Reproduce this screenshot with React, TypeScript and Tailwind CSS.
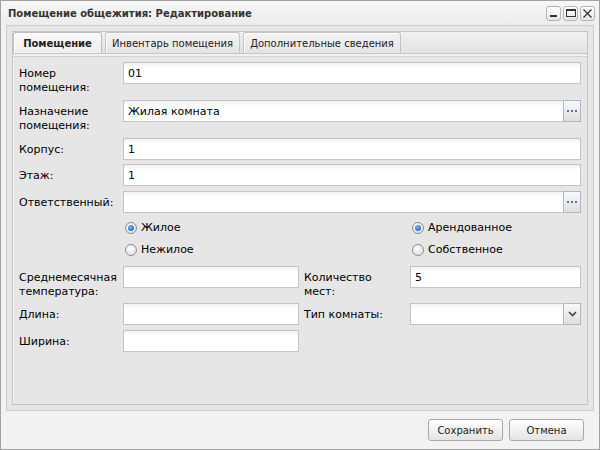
import type { ReactNode } from "react";

const font = "font-['DejaVu_Sans',sans-serif]";

function Label({ children, w = "w-[104px]" }: { children: ReactNode; w?: string }) {
  return <div className={`${w} shrink-0 pt-[5px] text-[11px] leading-[14px] text-[#000]`}>{children}</div>;
}

function Field({ value = "", className = "" }: { value?: string; className?: string }) {
  return (
    <div
      className={`h-[22px] border border-[#c4c4c4] bg-[linear-gradient(#f1f1f1,#ffffff_5px)] px-[4px] pt-[1px] text-[11px] leading-[20px] text-black ${className}`}
    >
      {value}
    </div>
  );
}

function TriggerField({ value = "", kind }: { value?: string; kind: "dots" | "arrow" }) {
  return (
    <div className="flex h-[22px] flex-1">
      <div className="flex-1 border border-r-0 border-[#c4c4c4] bg-[linear-gradient(#f1f1f1,#ffffff_5px)] px-[4px] pt-[1px] text-[11px] leading-[20px] text-black">
        {value}
      </div>
      <div className="flex w-[18px] items-center justify-center border border-[#b3b6c6] bg-[linear-gradient(#fafafa,#dedede)]">
        {kind === "dots" ? (
          <div className="flex gap-[2px]">
            <span className="h-[2px] w-[2px] bg-[#3b7bc8]" />
            <span className="h-[2px] w-[2px] bg-[#3b7bc8]" />
            <span className="h-[2px] w-[2px] bg-[#3b7bc8]" />
          </div>
        ) : (
          <svg width="9" height="6" viewBox="0 0 9 6">
            <path d="M1 1 L4.5 4.5 L8 1" stroke="#444" strokeWidth="1.6" fill="none" />
          </svg>
        )}
      </div>
    </div>
  );
}

function Radio({ checked, label }: { checked?: boolean; label: string }) {
  return (
    <div className="flex h-[22px] items-center gap-[4px]">
      <span className="flex h-[12px] w-[12px] items-center justify-center rounded-full border border-[#8e8f8f] bg-[radial-gradient(circle_at_40%_35%,#ffffff,#d8d8d8)]">
        {checked && <span className="h-[6px] w-[6px] rounded-full bg-[radial-gradient(circle_at_40%_35%,#6fb6ff,#0a58b0)]" />}
      </span>
      <span className="text-[11px] text-black">{label}</span>
    </div>
  );
}

function ToolButton({ children }: { children: ReactNode }) {
  return (
    <div className="flex h-[15px] w-[15px] items-center justify-center rounded-[3px] border border-[#b4b4b4] bg-[linear-gradient(#ffffff,#e6e6e6)]">
      {children}
    </div>
  );
}

function Button({ children }: { children: ReactNode }) {
  return (
    <button className="h-[22px] w-[75px] rounded-[3px] border border-[#a9a9a9] bg-[linear-gradient(#ffffff,#e4e4e4)] text-[10px] text-[#222]">
      {children}
    </button>
  );
}

function Tab({ children, active, w }: { children: ReactNode; active?: boolean; w: string }) {
  return (
    <div
      className={`flex h-[21px] ${w} items-center justify-center whitespace-nowrap rounded-t-[3px] border border-b-0 text-[10px] text-[#222] shadow-[inset_1px_1px_0_#ffffff] ${
        active
          ? "border-[#bdbdbd] bg-[linear-gradient(#fafafa,#eeeeee)] font-bold"
          : "border-[#c4c4c4] bg-[linear-gradient(#f4f4f4,#e4e4e4)]"
      }`}
    >
      {children}
    </div>
  );
}

export default function App() {
  return (
    <div className={`flex h-[450px] w-[600px] flex-col border border-[#a3a3a3] bg-[#f2f2f2] ${font}`}>
      {/* title bar */}
      <div className="flex h-[24px] shrink-0 items-center justify-between bg-[linear-gradient(#f7f7f7,#ececec)] pl-[7px] pr-[4px]">
        <span className="text-[10px] font-bold text-[#333]">Помещение общежития: Редактирование</span>
        <div className="flex gap-[2px]">
          <ToolButton>
            <span className="mt-[6px] h-[2px] w-[7px] bg-[#333]" />
          </ToolButton>
          <ToolButton>
            <span className="h-[8px] w-[10px] border border-t-2 border-[#333]" />
          </ToolButton>
          <ToolButton>
            <svg width="9" height="9" viewBox="0 0 9 9">
              <path d="M0.5 0.5 L8.5 8.5 M8.5 0.5 L0.5 8.5" stroke="#333" strokeWidth="1.2" />
            </svg>
          </ToolButton>
        </div>
      </div>

      {/* body */}
      <div className="flex flex-1 flex-col px-[5px]">
        <div className="flex flex-1 flex-col border border-[#cdcdcd] bg-[#e6e6e6] p-[5px]">
          <div className="flex flex-1 flex-col border border-[#c6c6c6]">
            {/* tab strip */}
            <div className="flex h-[22px] items-end gap-[3px] border-b border-[#c6c6c6] bg-[linear-gradient(#f1f1f1,#e2e2e2)]">
              <Tab active w="w-[89px]">Помещение</Tab>
              <Tab w="w-[135px]">Инвентарь помещения</Tab>
              <Tab w="w-[158px]">Дополнительные сведения</Tab>
            </div>
            <div className="h-[3px] border-b border-[#d2d2d2] bg-[#f0f0f0]" />

            {/* form */}
            <div className="flex flex-1 flex-col border-l border-[#f2f2f2] bg-[#e6e6e6] pl-[5px] pr-[6px] pt-[5px]">
              <div className="flex h-[38px]">
                <Label>
                  Номер
                  <br />
                  помещения:
                </Label>
                <Field value="01" className="flex-1" />
              </div>
              <div className="flex h-[38px]">
                <Label>
                  Назначение
                  <br />
                  помещения:
                </Label>
                <TriggerField value="Жилая комната" kind="dots" />
              </div>
              <div className="flex h-[26px]">
                <Label>Корпус:</Label>
                <Field value="1" className="flex-1" />
              </div>
              <div className="flex h-[27px]">
                <Label>Этаж:</Label>
                <Field value="1" className="flex-1" />
              </div>
              <div className="flex h-[26px]">
                <Label>Ответственный:</Label>
                <TriggerField kind="dots" />
              </div>
              <div className="flex h-[49px]">
                <div className="w-[106px] shrink-0" />
                <div className="flex w-[287px] flex-col">
                  <Radio checked label="Жилое" />
                  <Radio label="Нежилое" />
                </div>
                <div className="flex flex-col">
                  <Radio checked label="Арендованное" />
                  <Radio label="Собственное" />
                </div>
              </div>
              <div className="flex h-[37px]">
                <Label>
                  Среднемесячная
                  <br />
                  температура:
                </Label>
                <Field className="w-[176px]" />
                <div className="w-[5px]" />
                <Label w="w-[106px]">
                  Количество
                  <br />
                  мест:
                </Label>
                <Field value="5" className="flex-1" />
              </div>
              <div className="flex h-[27px]">
                <Label>Длина:</Label>
                <Field className="w-[176px]" />
                <div className="w-[5px]" />
                <Label w="w-[106px]">Тип комнаты:</Label>
                <TriggerField kind="arrow" />
              </div>
              <div className="flex h-[26px]">
                <Label>Ширина:</Label>
                <Field className="w-[176px]" />
              </div>
            </div>
          </div>
        </div>
      </div>

      {/* footer */}
      <div className="flex h-[38px] shrink-0 items-center justify-end gap-[6px] pr-[15px]">
        <Button>Сохранить</Button>
        <Button>Отмена</Button>
      </div>
    </div>
  );
}
